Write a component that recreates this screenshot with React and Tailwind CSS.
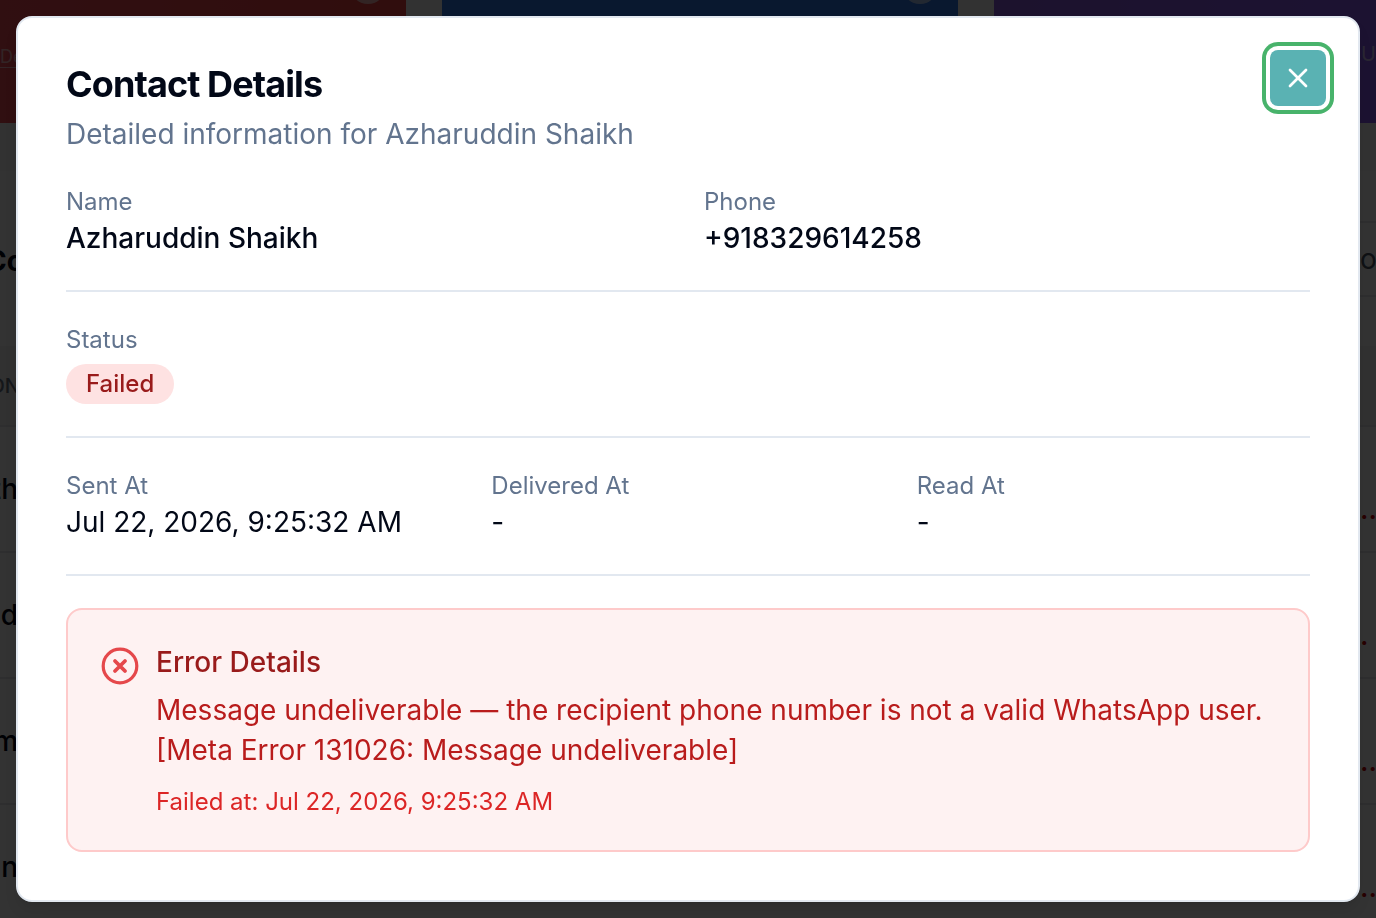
import React from "react";
import { X } from "lucide-react";

const contact = {
  name: "Azharuddin Shaikh",
  phone: "+918329614258",
  status: "Failed",
  sentAt: "Jul 22, 2026, 9:25:32 AM",
  deliveredAt: "-",
  readAt: "-",
  error:
    "Message undeliverable — the recipient phone number is not a valid WhatsApp user. [Meta Error 131026: Message undeliverable]",
  failedAt: "Jul 22, 2026, 9:25:32 AM",
};

const rows = [
  { id: 1, name: "th", error: ".." },
  { id: 2, name: "d", error: "." },
  { id: 3, name: "m", error: ".." },
  { id: 4, name: "n", error: ".." },
];

const Field = ({ label, value, bold }) => (
  <div>
    <dt className="text-2xl leading-8 text-slate-500">{label}</dt>
    <dd className={`text-[28px] leading-10 ${bold ? "font-medium" : ""}`}>{value}</dd>
  </div>
);

const CampaignPage = () => (
  <div className="fixed inset-0 overflow-hidden bg-gray-50 text-[28px]" aria-hidden="true">
    <div className="grid h-[123px] grid-cols-[406px_516px_1fr] gap-9">
      <div className="flex flex-col items-end justify-between bg-linear-to-r from-[#f04a58] to-[#ef4040] pr-5">
        <span className="-mt-8 size-9 rounded-full bg-white/60"></span>
        <span className="mb-13 self-start text-lg text-white/60 underline underline-offset-4">De</span>
      </div>
      <div className="flex items-start justify-end bg-[#3078e8] pr-5">
        <span className="-mt-8 size-9 rounded-full bg-white/60"></span>
      </div>
      <div className="flex items-center justify-end bg-linear-to-r from-[#8b5ce0] to-[#8b5cf6]">
        <span className="-mt-4 text-xl text-white/60">U</span>
      </div>
    </div>
    <div className="mt-12 bg-white">
      <div className="flex h-[175px] items-center justify-between">
        <span className="flex w-6 justify-end pt-1 font-bold">Co</span>
        <span className="flex h-[76px] w-4 items-center border-y-2 border-gray-200 text-gray-600">o</span>
      </div>
      <div className="flex h-[81px] items-center border-b-2 border-gray-200 bg-gray-100 text-xl font-medium text-gray-500">
        <span className="flex w-5 justify-end">ON</span>
      </div>
      {rows.map((row) => (
        <div key={row.id} className="flex h-[126px] items-center justify-between border-b-2 border-gray-200 font-medium">
          <span className="flex w-[18px] justify-end">{row.name}</span>
          <span className="w-4 pt-10 text-red-700">{row.error}</span>
        </div>
      ))}
    </div>
  </div>
);

const App = () => {
  return (
    <div className="min-h-screen font-['Inter',sans-serif] text-[#020817]">
      <CampaignPage />
      <div className="fixed inset-0 bg-black/80"></div>

      <div className="relative p-4">
        <div
          role="dialog"
          aria-modal="true"
          aria-labelledby="contact-title"
          className="relative flex flex-col gap-8 rounded-2xl border-2 border-slate-200 bg-white p-12 shadow-lg"
        >
          <div className="flex flex-col gap-3">
            <h2 id="contact-title" className="text-4xl leading-9 font-bold tracking-tight">
              Contact Details
            </h2>
            <p className="text-[28px] leading-10 text-slate-500">Detailed information for {contact.name}</p>
          </div>

          <dl className="grid grid-cols-2 gap-8">
            <Field label="Name" value={contact.name} bold />
            <Field label="Phone" value={contact.phone} bold />
          </dl>

          <hr className="border-t-2 border-slate-200" />

          <div className="flex flex-col items-start gap-2">
            <p className="text-2xl leading-8 text-slate-500">Status</p>
            <span className="rounded-full bg-[#fee2e2] px-5 py-1 text-2xl leading-8 font-medium text-[#991b1b]">
              {contact.status}
            </span>
          </div>

          <hr className="border-t-2 border-slate-200" />

          <dl className="grid grid-cols-3 gap-8">
            <Field label="Sent At" value={contact.sentAt} />
            <Field label="Delivered At" value={contact.deliveredAt} />
            <Field label="Read At" value={contact.readAt} />
          </dl>

          <hr className="border-t-2 border-slate-200" />

          <div className="flex items-start gap-4 rounded-2xl border-2 border-[#fecaca] bg-[#fef2f2] p-8">
            <svg
              className="mt-1 size-10 shrink-0 text-[#e5484b]"
              viewBox="0 0 20 20"
              fill="none"
              stroke="currentColor"
              strokeLinecap="round"
              aria-hidden="true"
            >
              <circle cx="10" cy="10" r="8.4" strokeWidth="1.6" />
              <path d="M7.5 7.5l5 5M12.5 7.5l-5 5" strokeWidth="1.9" />
            </svg>
            <div className="flex-1">
              <h3 className="text-[28px] leading-10 font-medium text-[#991b1b]">Error Details</h3>
              <p className="mt-2 text-[28px] leading-10 text-[#b91c1c]">{contact.error}</p>
              <p className="mt-4 text-2xl leading-8 text-[#dc2626]">Failed at: {contact.failedAt}</p>
            </div>
          </div>

          <button
            type="button"
            aria-label="Close"
            className="absolute top-8 right-8 flex size-14 items-center justify-center rounded-lg bg-[#5ab2b3] text-white ring-4 ring-[#48b36b] ring-offset-4 ring-offset-white"
          >
            <X className="size-8" strokeWidth={2} />
          </button>
        </div>
      </div>
    </div>
  );
};

export default App;
